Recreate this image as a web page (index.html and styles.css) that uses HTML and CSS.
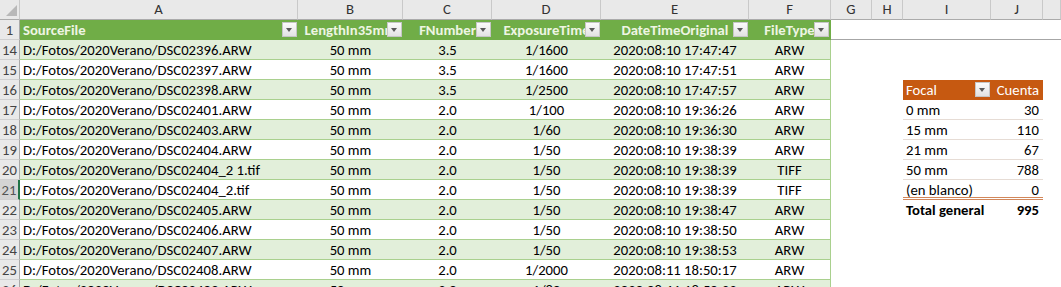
FILE: index.html
```html
<!DOCTYPE html>
<html lang="es">
<head>
<meta charset="utf-8">
<title>Hoja</title>
<link rel="stylesheet" href="styles.css">
</head>
<body>
<div class="sheet">
  <div class="row colhead">
    <div class="corner"><span class="tri"></span></div>
    <div class="ch">A</div><div class="ch">B</div><div class="ch">C</div><div class="ch">D</div><div class="ch">E</div><div class="ch">F</div><div class="ch">G</div><div class="ch">H</div><div class="ch">I</div><div class="ch">J</div><div class="ch"></div>
  </div>

  <div class="row">
    <div class="rh">1</div>
    <div class="th left">SourceFile<span class="fb"></span></div>
    <div class="th">LengthIn35mm<span class="fb"></span></div>
    <div class="th">FNumber<span class="fb"></span></div>
    <div class="th">ExposureTime<span class="fb"></span></div>
    <div class="th">DateTimeOriginal<span class="fb"></span></div>
    <div class="th">FileType<span class="fb"></span></div>
    <div class="e fz"></div><div class="e fz"></div><div class="e fz"></div><div class="e fz"></div><div class="e fz"></div>
  </div>

  <div class="row band">
    <div class="rh">14</div>
    <div class="td left">D:/Fotos/2020Verano/DSC02396.ARW</div><div class="td">50 mm</div><div class="td">3.5</div><div class="td">1/1600</div><div class="td">2020:08:10 17:47:47</div><div class="td last">ARW</div>
    <div class="e"></div><div class="e"></div><div class="e"></div><div class="e"></div><div class="e"></div>
  </div>
  <div class="row">
    <div class="rh">15</div>
    <div class="td left">D:/Fotos/2020Verano/DSC02397.ARW</div><div class="td">50 mm</div><div class="td">3.5</div><div class="td">1/1600</div><div class="td">2020:08:10 17:47:51</div><div class="td last">ARW</div>
    <div class="e"></div><div class="e"></div><div class="e"></div><div class="e"></div><div class="e"></div>
  </div>
  <div class="row band">
    <div class="rh">16</div>
    <div class="td left">D:/Fotos/2020Verano/DSC02398.ARW</div><div class="td">50 mm</div><div class="td">3.5</div><div class="td">1/2500</div><div class="td">2020:08:10 17:47:57</div><div class="td last">ARW</div>
    <div class="e"></div><div class="e"></div>
    <div class="pv pvh">Focal<span class="fb"></span></div><div class="pv pvh num">Cuenta</div>
    <div class="e"></div>
  </div>
  <div class="row">
    <div class="rh">17</div>
    <div class="td left">D:/Fotos/2020Verano/DSC02401.ARW</div><div class="td">50 mm</div><div class="td">2.0</div><div class="td">1/100</div><div class="td">2020:08:10 19:36:26</div><div class="td last">ARW</div>
    <div class="e"></div><div class="e"></div>
    <div class="pv">0 mm</div><div class="pv num">30</div>
    <div class="e"></div>
  </div>
  <div class="row band">
    <div class="rh">18</div>
    <div class="td left">D:/Fotos/2020Verano/DSC02403.ARW</div><div class="td">50 mm</div><div class="td">2.0</div><div class="td">1/60</div><div class="td">2020:08:10 19:36:30</div><div class="td last">ARW</div>
    <div class="e"></div><div class="e"></div>
    <div class="pv">15 mm</div><div class="pv num">110</div>
    <div class="e"></div>
  </div>
  <div class="row">
    <div class="rh">19</div>
    <div class="td left">D:/Fotos/2020Verano/DSC02404.ARW</div><div class="td">50 mm</div><div class="td">2.0</div><div class="td">1/50</div><div class="td">2020:08:10 19:38:39</div><div class="td last">ARW</div>
    <div class="e"></div><div class="e"></div>
    <div class="pv">21 mm</div><div class="pv num">67</div>
    <div class="e"></div>
  </div>
  <div class="row band">
    <div class="rh">20</div>
    <div class="td left">D:/Fotos/2020Verano/DSC02404_2 1.tif</div><div class="td">50 mm</div><div class="td">2.0</div><div class="td">1/50</div><div class="td">2020:08:10 19:38:39</div><div class="td last">TIFF</div>
    <div class="e"></div><div class="e"></div>
    <div class="pv">50 mm</div><div class="pv num">788</div>
    <div class="e"></div>
  </div>
  <div class="row">
    <div class="rh sel">21</div>
    <div class="td left">D:/Fotos/2020Verano/DSC02404_2.tif</div><div class="td">50 mm</div><div class="td">2.0</div><div class="td">1/50</div><div class="td">2020:08:10 19:38:39</div><div class="td last">TIFF</div>
    <div class="e"></div><div class="e"></div>
    <div class="pv pvlast">(en blanco)</div><div class="pv pvlast num">0</div>
    <div class="e"></div>
  </div>
  <div class="row band">
    <div class="rh">22</div>
    <div class="td left">D:/Fotos/2020Verano/DSC02405.ARW</div><div class="td">50 mm</div><div class="td">2.0</div><div class="td">1/50</div><div class="td">2020:08:10 19:38:47</div><div class="td last">ARW</div>
    <div class="e"></div><div class="e"></div>
    <div class="pv pvt">Total general</div><div class="pv pvt num">995</div>
    <div class="e"></div>
  </div>
  <div class="row">
    <div class="rh">23</div>
    <div class="td left">D:/Fotos/2020Verano/DSC02406.ARW</div><div class="td">50 mm</div><div class="td">2.0</div><div class="td">1/50</div><div class="td">2020:08:10 19:38:50</div><div class="td last">ARW</div>
    <div class="e"></div><div class="e"></div><div class="e"></div><div class="e"></div><div class="e"></div>
  </div>
  <div class="row band">
    <div class="rh">24</div>
    <div class="td left">D:/Fotos/2020Verano/DSC02407.ARW</div><div class="td">50 mm</div><div class="td">2.0</div><div class="td">1/50</div><div class="td">2020:08:10 19:38:53</div><div class="td last">ARW</div>
    <div class="e"></div><div class="e"></div><div class="e"></div><div class="e"></div><div class="e"></div>
  </div>
  <div class="row">
    <div class="rh">25</div>
    <div class="td left">D:/Fotos/2020Verano/DSC02408.ARW</div><div class="td">50 mm</div><div class="td">2.0</div><div class="td">1/2000</div><div class="td">2020:08:11 18:50:17</div><div class="td last">ARW</div>
    <div class="e"></div><div class="e"></div><div class="e"></div><div class="e"></div><div class="e"></div>
  </div>
  <div class="row band">
    <div class="rh">26</div>
    <div class="td left">D:/Fotos/2020Verano/DSC02409.ARW</div><div class="td">50 mm</div><div class="td">2.0</div><div class="td">1/80</div><div class="td">2020:08:11 18:50:33</div><div class="td last">ARW</div>
    <div class="e"></div><div class="e"></div><div class="e"></div><div class="e"></div><div class="e"></div>
  </div>
</div>
</body>
</html>
```

FILE: styles.css
```css
html, body {
  margin: 0;
  padding: 0;
  background: #ffffff;
  overflow: hidden;
}

.sheet {
  font-family: Carlito, Lato, "Liberation Sans", sans-serif;
  font-size: 14.7px;
  color: #000000;
  width: 1061px;
}

.row {
  display: grid;
  grid-template-columns: 20px 278px 105px 89px 109px 148px 82px 41px 31px 88px 52px 1fr;
  height: 20px;
}

.row > div {
  box-sizing: border-box;
  height: 20px;
  line-height: 20px;
  white-space: nowrap;
  overflow: hidden;
  position: relative;
}

/* column header strip */
.colhead > div {
  background: #e9e9e9;
  border-right: 1px solid #c9c9c9;
  border-bottom: 1px solid #ababab;
  text-align: center;
  color: #333333;
  line-height: 19px;
}

.corner {
  background: #e9e9e9;
}

.tri {
  position: absolute;
  right: 2px;
  bottom: 3px;
  width: 0;
  height: 0;
  border-left: 11px solid transparent;
  border-bottom: 11px solid #b8b8b8;
}

/* row numbers */
.rh {
  background: #e9e9e9;
  border-right: 1px solid #a9a9a9;
  border-bottom: 1px solid #d0d0d0;
  text-align: center;
  color: #444444;
}

.rh.sel {
  background: #d4d4d4;
  border-right: 2px solid #217346;
  color: #555555;
}

/* table header */
.th {
  background: #70ad47;
  color: #eef5e3;
  font-weight: bold;
  text-align: center;
}

.th.left {
  text-align: left;
  padding-left: 3px;
}

.th:nth-child(7) {
  border-right: 1px solid #70ad47;
}

.fb {
  position: absolute;
  right: 1px;
  top: 2px;
  width: 15px;
  height: 15px;
  box-sizing: border-box;
  background: linear-gradient(#fbfbfb, #e2e2e2);
  border: 1px solid #c6c6c6;
}

.fb::after {
  content: "";
  position: absolute;
  left: 3px;
  top: 5px;
  border-left: 3.5px solid transparent;
  border-right: 3.5px solid transparent;
  border-top: 4px solid #5a5a5a;
}

/* table body */
.td {
  background: #ffffff;
  border-bottom: 1px solid #a9d08e;
  text-align: center;
}

.band .td {
  background: #e2efda;
}

.td.left {
  text-align: left;
  padding-left: 3px;
}

.td.last {
  border-right: 1px solid #a9d08e;
}

.e {
  background: #ffffff;
}

.e.fz {
  border-bottom: 1px solid #a6a6a6;
}

/* pivot table */
.pv {
  background: #ffffff;
  padding-left: 3px;
  border-bottom: 1px solid #e6dcd5;
}

.pv.num {
  text-align: right;
  padding-left: 0;
  padding-right: 4px;
}

.pvh {
  background: #c65911;
  color: #ffffff;
  border-bottom: 1px solid #c65911;
}

.pvlast {
  border-bottom: 3px double #d2875a;
}

.pvt {
  font-weight: bold;
  border-bottom: none;
}
```
